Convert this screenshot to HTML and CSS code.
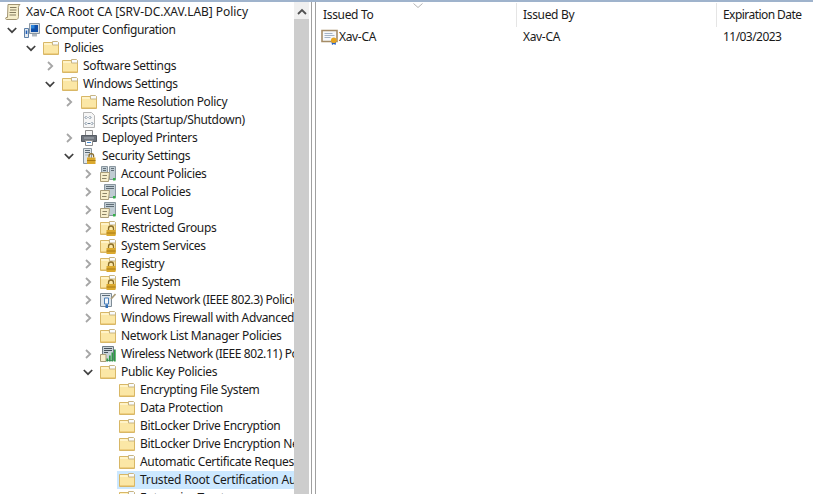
FILE: index.html
```html
<!DOCTYPE html>
<html lang="en">
<head>
<meta charset="utf-8">
<title>Group Policy Management Editor</title>
<link rel="stylesheet" href="styles.css">
</head>
<body>
<svg class="defs" width="0" height="0" aria-hidden="true">
  <defs>
    <symbol id="open" viewBox="0 0 12 12"><path d="M1.800 4 6 8.200 10.200 4" fill="none" stroke="#404040" stroke-width="1.700"/></symbol>
    <symbol id="closed" viewBox="0 0 12 12"><path d="M4 2 8.200 6 4 10" fill="none" stroke="#a6a6a6" stroke-width="1.800"/></symbol>
    <symbol id="folder" viewBox="0 0 16 16">
      <path d="M.5 2.500h15v12H.5z" fill="#fbe7a6" stroke="#d8b766"/>
      <path d="M1 3h7l1.500 2H1z" fill="#fff3c8"/>
      <path d="M9.500 1.500h5l1 1v2.500h-6z" fill="#f8fbff" stroke="#c8b584"/>
      <path d="M1 13.500h14" stroke="#efcf80"/>
    </symbol>
    <symbol id="lockfolder" viewBox="0 0 16 16">
      <use href="#folder"/>
      <path d="M8.500 10.500V8.500a2.500 2.500 0 0 1 5 0v2" fill="none" stroke="#8a6d2a" stroke-width="1.300"/>
      <path d="M6.500 10h9v6h-9z" fill="#dba92e"/>
      <path d="M6.500 13h9" stroke="#a87a14"/>
    </symbol>
    <symbol id="doc" viewBox="0 0 16 16">
      <path d="M3 .5h12c-1 .8-1.500 2-1.500 3v9c0 1.500-.8 3-2 3H1.500c-1 0-1-1.500-.5-2h1.500z" fill="#f6eecb" stroke="#a19472"/>
      <path d="M5 3.500h6.500M5 6h6.500M4.500 8.500H11M4.500 11H11" stroke="#857c60"/>
    </symbol>
    <symbol id="computer" viewBox="0 0 16 16">
      <path d="M5.500 1.500h10v10h-10z" fill="#d8dde2" stroke="#8b98a5"/>
      <path d="M7 3h7v7H7z" fill="#0f4ea8"/>
      <path d="M7 3h3.500v3.500H7z" fill="#2f86dc"/>
      <path d="M8 12h5v2.500H8z" fill="#aeb6be"/>
      <path d="M.5 6.500h4v9h-4z" fill="#e4eaf0" stroke="#5c7fa8"/>
      <path d="M2.500 8.500v3.500" stroke="#1f5fb8" stroke-width="1.600"/>
    </symbol>
    <symbol id="script" viewBox="0 0 16 16">
      <path d="M2.500.5h8l3 3v12h-11z" fill="#f6f6f6" stroke="#b6b6b6"/>
      <path d="M5.500 4 4 5.500 5.500 7M8.500 4 10 5.500 8.500 7M5.500 10 4 11.500 5.500 13M10.500 10 12 11.500 10.500 13M6.500 5.500h1M6.500 11.500h3" fill="none" stroke="#6e8296"/>
    </symbol>
    <symbol id="printer" viewBox="0 0 16 16">
      <path d="M4.500.5h7v5h-7z" fill="#f4f4f4" stroke="#8c8c8c"/>
      <path d="M.5 5.500h15v6h-15z" fill="#6e747c" stroke="#555b63"/>
      <path d="M3 8h10" stroke="#aab0b8"/>
      <path d="M4.500 10.500h7v5h-7z" fill="#fff" stroke="#8c8c8c"/>
      <path d="M6 12.500h4" stroke="#3f87d0"/>
    </symbol>
    <symbol id="lockserver" viewBox="0 0 16 16">
      <path d="M2.500.5h8v15h-8z" fill="#dfe5e9" stroke="#8a969f"/>
      <path d="M4 2.500h5M4 4.500h5" stroke="#5b6a76"/>
      <path d="M4 6.500h5v1H4z" fill="#aeb9c1"/>
      <path d="M8 9.500V8a2.300 2.300 0 0 1 4.600 0v1.500" fill="none" stroke="#8a6d2a" stroke-width="1.300"/>
      <path d="M6 9.500h8.500V16H6z" fill="#dba92e"/>
      <path d="M6 12.500h8.500" stroke="#a87a14"/>
    </symbol>
    <symbol id="policy" viewBox="0 0 16 16">
      <path d="M4.500.5h11v13h-11z" fill="#c0ccd3" stroke="#8a97a0"/>
      <path d="M6 2.500h8M6 4.500h8" stroke="#5f6c76"/>
      <path d="M.5 6.500h9l-1 9h-8z" fill="#f7eecb" stroke="#a99c78"/>
      <path d="M2.500 9.500h4.500M2 12.500h4.500" stroke="#8c8468"/>
      <path d="M13 12h2.500v2.500H13z" fill="#35b04a"/>
    </symbol>
    <symbol id="policies" viewBox="0 0 16 16">
      <path d="M1.500 .5h6v8h-6z" fill="#c0ccd3" stroke="#8a97a0"/>
      <path d="M9.500 .5h6v13h-6z" fill="#c0ccd3" stroke="#8a97a0"/>
      <path d="M3 2.500h3M3 4.500h3M11 2.500h3M11 4.500h3" stroke="#5f6c76"/>
      <path d="M.5 6.500h9l-1 9h-8z" fill="#f7eecb" stroke="#a99c78"/>
      <path d="M2.500 9.500h4.500M2 12.500h4.500" stroke="#8c8468"/>
      <path d="M13 12h2.500v2.500H13z" fill="#35b04a"/>
    </symbol>
    <symbol id="wired" viewBox="0 0 16 16">
      <path d="M.5 1.500h11v13H.5z" fill="#dfe6ec" stroke="#7f8c96"/>
      <path d="M2 3.500h8" stroke="#5b6a76"/>
      <path d="M4.500 6h4v6h-4z" fill="#f5f8fb" stroke="#4a7fb8"/>
      <path d="M5.500 12.500H8V16H5.500z" fill="#2f6fb8"/>
      <path d="M11 7 15.500 2" stroke="#a99c78" stroke-width="1.600"/>
    </symbol>
    <symbol id="wireless" viewBox="0 0 16 16">
      <path d="M2.500.5h11v14h-11z" fill="#c8d2d9" stroke="#6e7a84"/>
      <path d="M4 2.500h8M4 4.500h8M4 6.500h4" stroke="#46525c"/>
      <path d="M.5 8.500h5.500v7H.5z" fill="#f7eecb" stroke="#a99c78"/>
      <path d="M6.500 15.500v-3h1.700v3zM9 15.500v-6h1.700v6zM11.500 15.500V6.500h1.700v9zM14 15.500V3.500h1.700v12z" fill="#2f9a46"/>
    </symbol>
    <symbol id="cert" viewBox="0 0 18 16">
      <path d="M1 1.500h15v11H1z" fill="#f6f8fa" stroke="#a58c66" stroke-width="1.600"/>
      <path d="M3.500 4.500h8M3.500 6.500h10M3.500 8.500h6" stroke="#a4b4c6"/>
      <path d="M10.500 13 11 16l1.800-1 1.800 1 .5-3z" fill="#2a62c4"/>
      <circle cx="12.800" cy="11.300" r="2.800" fill="#e6a520"/>
    </symbol>
  </defs>
</svg>
<main class="console">
  <nav class="tree">
    <ul class="rows">
      <li class="row l0 caps"><svg class="icon"><use href="#doc"/></svg><span>Xav-CA Root CA [SRV-DC.XAV.LAB] Policy</span></li>
      <li class="row l1"><svg class="chev"><use href="#open"/></svg><svg class="icon"><use href="#computer"/></svg><span>Computer Configuration</span></li>
      <li class="row l2"><svg class="chev"><use href="#open"/></svg><svg class="icon"><use href="#folder"/></svg><span>Policies</span></li>
      <li class="row l3"><svg class="chev"><use href="#closed"/></svg><svg class="icon"><use href="#folder"/></svg><span>Software Settings</span></li>
      <li class="row l3"><svg class="chev"><use href="#open"/></svg><svg class="icon"><use href="#folder"/></svg><span>Windows Settings</span></li>
      <li class="row l4"><svg class="chev"><use href="#closed"/></svg><svg class="icon"><use href="#folder"/></svg><span>Name Resolution Policy</span></li>
      <li class="row l4"><i class="chev"></i><svg class="icon"><use href="#script"/></svg><span>Scripts (Startup/Shutdown)</span></li>
      <li class="row l4"><svg class="chev"><use href="#closed"/></svg><svg class="icon"><use href="#printer"/></svg><span>Deployed Printers</span></li>
      <li class="row l4"><svg class="chev"><use href="#open"/></svg><svg class="icon"><use href="#lockserver"/></svg><span>Security Settings</span></li>
      <li class="row l5"><svg class="chev"><use href="#closed"/></svg><svg class="icon"><use href="#policies"/></svg><span>Account Policies</span></li>
      <li class="row l5"><svg class="chev"><use href="#closed"/></svg><svg class="icon"><use href="#policy"/></svg><span>Local Policies</span></li>
      <li class="row l5"><svg class="chev"><use href="#closed"/></svg><svg class="icon"><use href="#policy"/></svg><span>Event Log</span></li>
      <li class="row l5"><svg class="chev"><use href="#closed"/></svg><svg class="icon"><use href="#lockfolder"/></svg><span>Restricted Groups</span></li>
      <li class="row l5"><svg class="chev"><use href="#closed"/></svg><svg class="icon"><use href="#lockfolder"/></svg><span>System Services</span></li>
      <li class="row l5"><svg class="chev"><use href="#closed"/></svg><svg class="icon"><use href="#lockfolder"/></svg><span>Registry</span></li>
      <li class="row l5"><svg class="chev"><use href="#closed"/></svg><svg class="icon"><use href="#lockfolder"/></svg><span>File System</span></li>
      <li class="row l5 tight"><svg class="chev"><use href="#closed"/></svg><svg class="icon"><use href="#wired"/></svg><span>Wired Network (IEEE 802.3) Policies</span></li>
      <li class="row l5"><svg class="chev"><use href="#closed"/></svg><svg class="icon"><use href="#folder"/></svg><span>Windows Firewall with Advanced Security</span></li>
      <li class="row l5"><i class="chev"></i><svg class="icon"><use href="#folder"/></svg><span>Network List Manager Policies</span></li>
      <li class="row l5 tight"><svg class="chev"><use href="#closed"/></svg><svg class="icon"><use href="#wireless"/></svg><span>Wireless Network (IEEE 802.11) Policies</span></li>
      <li class="row l5"><svg class="chev"><use href="#open"/></svg><svg class="icon"><use href="#folder"/></svg><span>Public Key Policies</span></li>
      <li class="row l6"><svg class="icon"><use href="#folder"/></svg><span>Encrypting File System</span></li>
      <li class="row l6"><svg class="icon"><use href="#folder"/></svg><span>Data Protection</span></li>
      <li class="row l6"><svg class="icon"><use href="#folder"/></svg><span>BitLocker Drive Encryption</span></li>
      <li class="row l6"><svg class="icon"><use href="#folder"/></svg><span>BitLocker Drive Encryption Network Unlock</span></li>
      <li class="row l6"><svg class="icon"><use href="#folder"/></svg><span>Automatic Certificate Request Settings</span></li>
      <li class="row l6 selected"><svg class="icon"><use href="#folder"/></svg><span>Trusted Root Certification Authorities</span></li>
      <li class="row l6"><svg class="icon"><use href="#folder"/></svg><span>Enterprise Trust</span></li>
    </ul>
  </nav>
  <div class="scrollbar">
    <div class="scroll-btn"><svg class="scroll-arrow" viewBox="0 0 10 8"><path d="M1 6 5 2 9 6" fill="none" stroke="#505050" stroke-width="1.800"/></svg></div>
    <div class="scroll-track"></div>
  </div>
  <div class="splitter"></div>
  <section class="list">
    <header class="list-head">
      <div class="col col-to">Issued To<svg class="sort" viewBox="0 0 10 5"><path d="M.5.500 5 4.500 9.500.500" fill="none" stroke="#b4b4b4"/></svg></div>
      <div class="col col-by">Issued By</div>
      <div class="col col-exp">Expiration Date</div>
    </header>
    <div class="list-row">
      <div class="cell col-to"><svg class="cert"><use href="#cert"/></svg><span>Xav-CA</span></div>
      <div class="cell col-by">Xav-CA</div>
      <div class="cell col-exp">11/03/2023</div>
    </div>
  </section>
</main>
</body>
</html>
```

FILE: styles.css
```css
* { box-sizing: border-box; }
html, body { margin: 0; padding: 0; height: 100%; overflow: hidden; background: #fff; }
body { font: 12px/18px "Noto Sans", "Open Sans", sans-serif; color: #1a1a1a; letter-spacing: -0.33px; }
.defs { position: absolute; }
.console { display: flex; height: 494px; border-top: 2px solid #9fb3cc; overflow: hidden; }
.tree { width: 294px; flex: none; overflow: hidden; padding-top: 1px; }
.rows { list-style: none; margin: 0; padding: 0; }
.row { display: flex; align-items: center; height: 18px; white-space: nowrap; }
.row span { margin-left: 5px; }
.caps { letter-spacing: -0.05px; }
.tight { letter-spacing: -0.42px; }
.l0 { padding-left: 5px; }
.l1 { padding-left: 4px; }
.l2 { padding-left: 23px; }
.l3 { padding-left: 42px; }
.l4 { padding-left: 61px; }
.l5 { padding-left: 80px; }
.l6 { padding-left: 119px; }
.selected { background: #cce8ff; margin-left: 117px; padding-left: 2px; letter-spacing: -0.2px; }
.chev { display: block; flex: none; width: 12px; height: 12px; margin: 0 6px 0 2px; }
.icon { display: block; flex: none; width: 16px; height: 16px; }
.scrollbar { width: 15px; flex: none; display: flex; flex-direction: column; background: #cdcdcd; }
.scroll-btn { height: 17px; flex: none; display: flex; align-items: center; justify-content: center; padding-top: 2px; background: #f0f0f0; }
.scroll-arrow { width: 10px; height: 8px; }
.scroll-track { flex: 1; }
.splitter { width: 5px; flex: none; margin-left: 2px; border-left: 1px solid #a0a0a0; border-right: 1px solid #a0a0a0; }
.list { flex: 1; min-width: 0; }
.list-head { display: flex; height: 25px; padding-top: 1px; }
.list-head .col { position: relative; display: flex; align-items: center; height: 24px; padding-left: 6px; border-right: 1px solid #e5e5e5; }
.col-to { width: 201px; flex: none; }
.col-by { width: 200px; flex: none; }
.col-exp { flex: 1; letter-spacing: -0.55px; }
.list-head .col-to { padding-left: 7px; }
.list-head .col-exp { border-right: 0; }
.sort { position: absolute; left: 97px; top: 0; width: 10px; height: 5px; }
.list-row { display: flex; height: 18px; margin-top: 1px; }
.cell { display: flex; align-items: center; padding-left: 6px; }
.cell.col-to { padding-left: 5px; }
.cert { display: block; flex: none; width: 18px; height: 16px; }
```
